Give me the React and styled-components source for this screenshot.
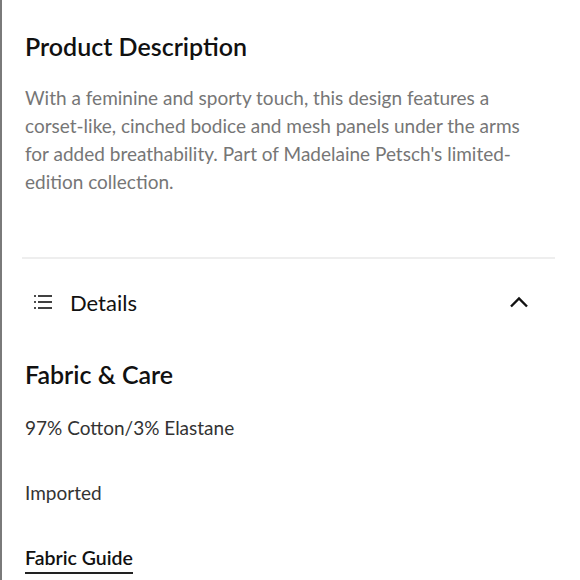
import styled, { createGlobalStyle } from "styled-components";

const GlobalStyle = createGlobalStyle`
  body {
    margin: 0;
    background: #ffffff;
    font-family: "Lato", "Liberation Sans", sans-serif;
  }
`;

const Page = styled.main`
  width: 580px;
  height: 580px;
  box-sizing: border-box;
  border-left: 2px solid #7a7a7a;
  padding: 0 25px 0 23px;
  overflow: hidden;
`;

const SectionTitle = styled.h2`
  margin: 30px 0 0;
  font-size: 25px;
  line-height: 32px;
  font-weight: 600;
  color: #111111;
`;

const Description = styled.p`
  margin: 22px 0 0;
  max-width: 522px;
  font-size: 19px;
  line-height: 28px;
  color: #767676;
`;

const Divider = styled.hr`
  margin: 61px 0 0 -3px;
  border: 0;
  border-top: 2px solid #eeeeee;
`;

const AccordionHeader = styled.button`
  display: flex;
  align-items: center;
  width: 100%;
  padding: 0 26px 0 8px;
  margin-top: 25px;
  height: 36px;
  border: 0;
  background: none;
  font-family: inherit;
  cursor: pointer;
`;

const HeaderLabel = styled.span`
  flex: 1;
  margin-left: 17px;
  text-align: left;
  font-size: 22px;
  color: #111111;
`;

const SubTitle = styled.h3`
  margin: 38px 0 0;
  font-size: 25px;
  line-height: 32px;
  font-weight: 600;
  color: #111111;
`;

const DetailLine = styled.p`
  margin: ${(p) => p.gap}px 0 0;
  font-size: 19px;
  line-height: 24px;
  color: #333333;
`;

const GuideLink = styled.a`
  display: inline-block;
  margin-top: 41px;
  padding-bottom: 2px;
  font-size: 19.5px;
  line-height: 24px;
  font-weight: 600;
  color: #111111;
  text-decoration: none;
  border-bottom: 2px solid #222222;
`;

function ListIcon() {
  return (
    <svg width="20" height="16" viewBox="0 0 20 16" fill="none">
      <g stroke="#111" strokeWidth="1.6">
        <line x1="1" y1="2" x2="3" y2="2" />
        <line x1="5" y1="2" x2="19" y2="2" />
        <line x1="1" y1="8" x2="3" y2="8" />
        <line x1="5" y1="8" x2="19" y2="8" />
        <line x1="1" y1="14" x2="3" y2="14" />
        <line x1="5" y1="14" x2="19" y2="14" />
      </g>
    </svg>
  );
}

function ChevronUp() {
  return (
    <svg width="20" height="14" viewBox="0 0 20 14" fill="none">
      <path d="M2 11.5 L10 3.5 L18 11.5" stroke="#111" strokeWidth="2.4" />
    </svg>
  );
}

export default function App() {
  return (
    <>
      <GlobalStyle />
      <Page>
        <SectionTitle>Product Description</SectionTitle>
        <Description>
          With a feminine and sporty touch, this design features a corset-like,
          cinched bodice and mesh panels under the arms for added breathability.
          Part of Madelaine Petsch's limited-edition collection.
        </Description>
        <Divider />
        <AccordionHeader>
          <ListIcon />
          <HeaderLabel>Details</HeaderLabel>
          <ChevronUp />
        </AccordionHeader>
        <SubTitle>Fabric &amp; Care</SubTitle>
        <DetailLine gap={26}>97% Cotton/3% Elastane</DetailLine>
        <DetailLine gap={41}>Imported</DetailLine>
        <GuideLink href="#">Fabric Guide</GuideLink>
      </Page>
    </>
  );
}
